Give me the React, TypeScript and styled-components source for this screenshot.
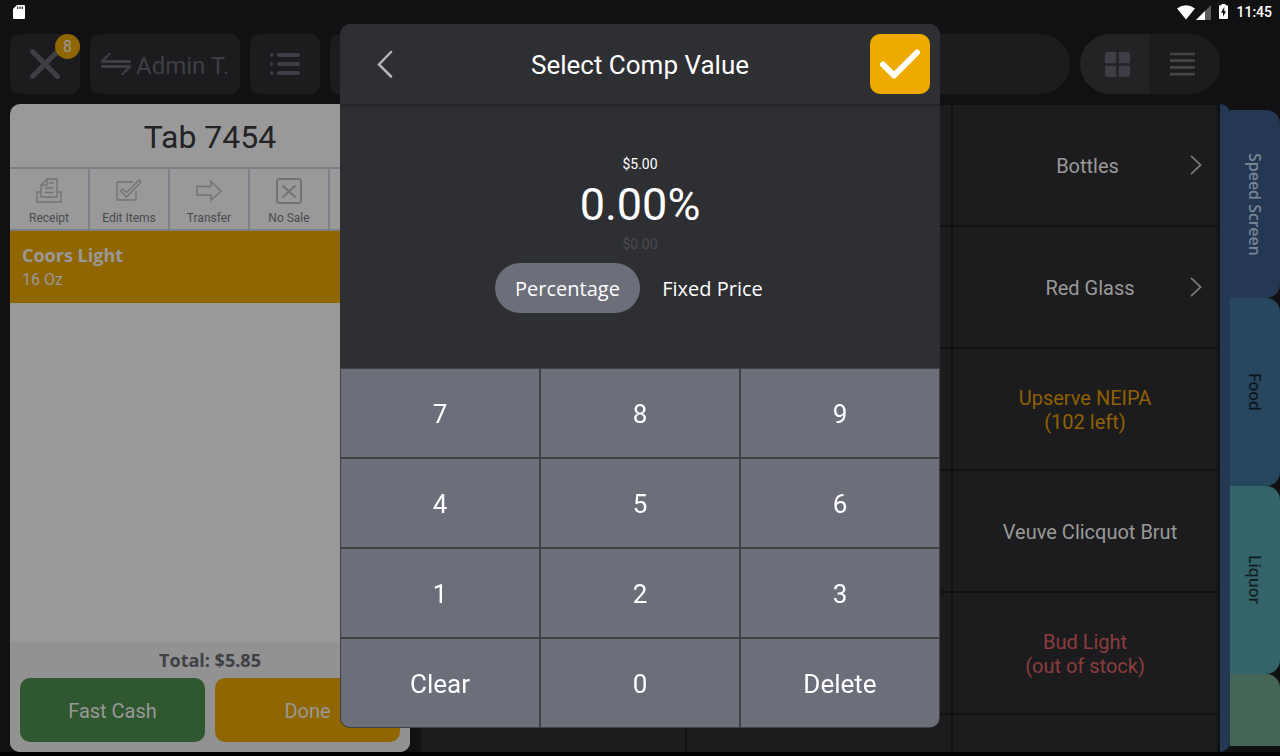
import React from "react";
import styled, { createGlobalStyle } from "styled-components";

const GlobalStyle = createGlobalStyle`
  * { box-sizing: border-box; }
  body { margin: 0; background: #111113; font-family: Roboto, "Liberation Sans", sans-serif; }
  button, input { font-family: inherit; border: 0; margin: 0; padding: 0; }
  button { cursor: pointer; }
  h1, h2, p { margin: 0; font-weight: 400; }
  svg { display: block; flex: none; }
`;

const Page = styled.div`
  height: 100vh;
  display: flex;
  flex-direction: column;
  background: #111113;
  border-bottom: 4px solid #000;
  overflow: hidden;
`;

const StatusBar = styled.header`
  height: 24px;
  flex: none;
  display: flex;
  align-items: center;
  justify-content: space-between;
  padding: 0 8px 0 13px;
`;

const StatusIcons = styled.div`
  display: flex;
  align-items: center;
  gap: 8px;
  color: #fff;
  font-size: 14px;
  font-weight: 500;
`;

const Signals = styled.span`
  display: flex;
  gap: 1px;
`;

const Toolbar = styled.div`
  flex: none;
  display: flex;
  gap: 10px;
  padding: 10px 60px 10px 10px;
`;

const ToolButton = styled.button<{ $width?: number }>`
  position: relative;
  flex: none;
  width: ${(p) => p.$width ?? 70}px;
  height: 60px;
  display: flex;
  align-items: center;
  justify-content: center;
  gap: 5px;
  border-radius: 10px;
  background: #1c1c1e;
  color: #3e3f46;
  font-size: 24px;
  line-height: 32px;
`;

const ToolLabel = styled.span`
  padding-top: 4px;
`;

const Badge = styled.span`
  position: absolute;
  top: 0;
  right: 0;
  width: 25px;
  height: 25px;
  border-radius: 50%;
  background: #906600;
  color: #999;
  font-size: 16px;
  line-height: 25px;
  text-align: center;
`;

const Search = styled.input`
  flex: 1;
  min-width: 0;
  height: 60px;
  border-radius: 30px;
  padding: 0 30px;
  background: #1c1c1e;
  color: #999;
  font-size: 20px;
  outline: none;
`;

const ViewToggle = styled.div`
  flex: none;
  display: flex;
  border-radius: 30px;
  overflow: hidden;
`;

const ViewButton = styled.button<{ $active?: boolean }>`
  width: 70px;
  height: 60px;
  display: flex;
  align-items: center;
  justify-content: center;
  background: ${(p) => (p.$active ? "#232326" : "#1c1c1e")};
  color: ${(p) => (p.$active ? "#3e3f46" : "#454547")};
  padding-left: ${(p) => (p.$active ? 5 : 0)}px;
  padding-right: ${(p) => (p.$active ? 0 : 5)}px;
`;

const Main = styled.main`
  flex: 1;
  min-height: 0;
  display: flex;
  padding-left: 10px;
`;

const Tab = styled.section`
  flex: none;
  width: 400px;
  margin-right: 10px;
  display: flex;
  flex-direction: column;
  border-radius: 10px;
  background: #999;
  overflow: hidden;
`;

const TabTitle = styled.h1`
  height: 65px;
  border-bottom: 2px solid #7d7e86;
  color: #232325;
  font-size: 32px;
  line-height: 66px;
  text-align: center;
`;

const Actions = styled.div`
  display: grid;
  grid-template-columns: repeat(5, 1fr);
  border-bottom: 2px solid #7d7e86;
`;

const Action = styled.button`
  height: 60px;
  display: flex;
  flex-direction: column;
  align-items: center;
  padding-top: 9px;
  gap: 7px;
  background: none;
  color: #494a50;
  font-size: 12px;
  line-height: 14px;
  border-right: 2px solid #7d7e86;
  &:last-child { border-right: 0; }
  svg { color: #737373; }
`;

const Item = styled.button`
  height: 72px;
  padding: 0 12px;
  background: #906600;
  color: #999;
  text-align: left;
`;

const ItemName = styled.span`
  display: block;
  font: 700 18px/26px "Open Sans", "Noto Sans", sans-serif;
`;

const ItemDetail = styled.span`
  display: block;
  font-size: 16px;
  line-height: 24px;
`;

const TabFooter = styled.footer`
  margin-top: auto;
  padding: 0 10px 10px;
  background: #929292;
`;

const Total = styled.p`
  color: #404147;
  font: 700 18px/36px "Open Sans", "Noto Sans", sans-serif;
  text-align: center;
`;

const PayRow = styled.div`
  display: grid;
  grid-template-columns: 1fr 1fr;
  gap: 10px;
`;

const PayButton = styled.button<{ $color: string }>`
  height: 64px;
  padding-top: 2px;
  border-radius: 10px;
  background: ${(p) => p.$color};
  color: #999;
  font-size: 20px;
`;

const Menu = styled.div`
  flex: 1;
  min-width: 0;
  margin-right: 2px;
  display: grid;
  grid-template-columns: repeat(3, 1fr);
  grid-auto-rows: 122px;
  overflow: hidden;
`;

const MenuItem = styled.button<{ $tone?: string; $indent?: number }>`
  position: relative;
  margin: 1px;
  padding-top: 2px;
  padding-left: ${(p) => p.$indent ?? 0}px;
  background: #1c1c1e;
  color: ${(p) => p.$tone ?? "#999"};
  font-size: 20px;
  line-height: 24px;
  white-space: pre-line;
`;

const More = styled.svg`
  position: absolute;
  right: 15px;
  top: 50px;
`;

const Rail = styled.div`
  flex: none;
  width: 10px;
  border-radius: 0 10px 10px 0;
  background: #243854;
`;

const Categories = styled.nav`
  flex: none;
  width: 50px;
  margin: 6px 0;
  overflow: hidden;
`;

const Category = styled.button<{ $color: string; $text: string }>`
  width: 50px;
  height: 188px;
  display: flex;
  align-items: center;
  justify-content: center;
  writing-mode: vertical-rl;
  border-radius: 0 14px 14px 0;
  background: ${(p) => p.$color};
  color: ${(p) => p.$text};
  font: 500 16px/20px "Noto Sans", "Open Sans", sans-serif;
`;

const Overlay = styled.div`
  position: fixed;
  inset: 24px 0 0;
  display: flex;
  justify-content: center;
  align-items: flex-start;
`;

const Dialog = styled.section`
  width: 600px;
  max-width: 100%;
  border-radius: 10px;
  background: #2e2f33;
  color: #fff;
  overflow: hidden;
`;

const DialogHeader = styled.header`
  height: 80px;
  padding: 0 10px;
  display: grid;
  grid-template-columns: 70px 1fr 70px;
  align-items: center;
  box-shadow: 0 1px 3px rgba(0, 0, 0, 0.4);
`;

const DialogTitle = styled.h2`
  padding-top: 2px;
  font-size: 26px;
  line-height: 32px;
  text-align: center;
`;

const BackButton = styled.button`
  width: 70px;
  height: 60px;
  display: flex;
  align-items: center;
  justify-content: center;
  background: none;
  color: #b4b4b6;
`;

const ConfirmButton = styled.button`
  justify-self: end;
  width: 60px;
  height: 60px;
  display: flex;
  align-items: center;
  justify-content: center;
  border-radius: 10px;
  background: #efaa00;
  color: #fff;
`;

const Amounts = styled.div`
  height: 264px;
  padding-top: 50px;
  text-align: center;
`;

const Price = styled.p<{ $faded?: boolean }>`
  color: ${(p) => (p.$faded ? "#4a4b4f" : "#fff")};
  font-size: 14px;
  line-height: 20px;
`;

const Value = styled.p`
  padding-top: 2px;
  font-size: 45px;
  line-height: 58px;
`;

const Modes = styled.div`
  display: flex;
  justify-content: center;
  margin-top: 9px;
`;

const Mode = styled.button<{ $active?: boolean }>`
  width: 145px;
  height: 50px;
  padding-top: 2px;
  border-radius: 25px;
  background: ${(p) => (p.$active ? "#6c6e7a" : "none")};
  color: #fff;
  font: 400 20px/28px "Open Sans", "Noto Sans", sans-serif;
`;

const Keypad = styled.div`
  display: grid;
  grid-template-columns: repeat(3, 1fr);
  border-radius: 0 0 10px 10px;
  overflow: hidden;
`;

const Key = styled.button`
  height: 90px;
  padding-top: 2px;
  border: 1px solid #414144;
  background: #6c6e7a;
  color: #fff;
  font-size: 26px;
  &:nth-last-child(3) { border-bottom-left-radius: 10px; }
  &:last-child { border-bottom-right-radius: 10px; }
`;

const ReceiptIcon = () => (
  <svg width="26" height="26" viewBox="0 0 26 26" fill="none" stroke="currentColor" strokeWidth="1.4">
    <path d="M5 19V7l6-6h10v18zM5 7h6V1" />
    <path d="M5 14H1v10h24V14h-4M13 5h4.500M9 10h8.500M9 14.500h8.500" />
  </svg>
);

const EditIcon = () => (
  <svg width="26" height="26" viewBox="0 0 26 26" fill="none" stroke="currentColor" strokeWidth="1.4">
    <path d="M17 4H2q-1 0-1 1v16q0 1 1 1h17q1 0 1-1v-8" />
    <path d="M4.500 13l2-2 4 3.500L23 2l2 2-14.500 15z" strokeLinejoin="round" />
  </svg>
);

const TransferIcon = () => (
  <svg width="26" height="26" viewBox="0 0 26 26" fill="none" stroke="currentColor" strokeWidth="1.500">
    <path d="M1 8.500h14V3.500L25 13 15 22v-5H1z" />
  </svg>
);

const NoSaleIcon = () => (
  <svg width="26" height="26" viewBox="0 0 26 26" fill="none" stroke="currentColor">
    <rect x="1" y="1" width="24" height="24" rx="2.500" strokeWidth="2" />
    <path d="M6.500 7.500l13 12M19.500 7.500l-13 12" strokeWidth="2" />
  </svg>
);

const actions = [
  { label: "Receipt", icon: <ReceiptIcon /> },
  { label: "Edit Items", icon: <EditIcon /> },
  { label: "Transfer", icon: <TransferIcon /> },
  { label: "No Sale", icon: <NoSaleIcon /> },
];

type MenuEntry = { label: string; more?: boolean; tone?: string; indent?: number };

const menu: MenuEntry[] = [
  { label: "Bottles", more: true, indent: 5 },
  { label: "Red Glass", more: true, indent: 10 },
  { label: "Upserve NEIPA\n(102 left)", tone: "#906000" },
  { label: "Veuve Clicquot Brut", indent: 10 },
  { label: "Bud Light\n(out of stock)", tone: "#8c3c3c" },
  { label: "" },
];

const categories = [
  { label: "Speed Screen", color: "#243854", text: "#7c8794" },
  { label: "Food", color: "#26475e", text: "#0c151c" },
  { label: "Liquor", color: "#34636a", text: "#101e20" },
  { label: "", color: "#456657", text: "#151f1a" },
];

const keys = ["7", "8", "9", "4", "5", "6", "1", "2", "3", "Clear", "0", "Delete"];

export default function App() {
  return (
    <>
      <GlobalStyle />
      <Page>
        <StatusBar>
          <svg width="12" height="14" viewBox="0 0 12 14">
            <path d="M4 0h7q1 0 1 1v12q0 1-1 1H1q-1 0-1-1V4z" fill="#fff" />
            <path d="M4.700 1.500v2.500M7 1.500v2.500M9.300 1.500v2.500" stroke="#111113" strokeWidth="1.100" />
          </svg>
          <StatusIcons>
            <Signals>
              <svg width="18" height="15" viewBox="0 0 18 15">
                <path d="M0 3.500Q9-3 18 3.500L9 14.500z" fill="#fff" />
              </svg>
              <svg width="15" height="15" viewBox="0 0 15 15">
                <path d="M0 15L15 0v15z" fill="#5c5c5d" />
                <path d="M0 15L9 6v9z" fill="#fff" />
              </svg>
            </Signals>
            <svg width="9" height="17" viewBox="0 0 9 17">
              <path d="M2.500 0h4v1.200H8q1 0 1 1V14q0 1-1 1H1q-1 0-1-1V2.200q0-1 1-1h1.500z" fill="#fff" />
              <path d="M5.300 3L2 8.800h2v4L7 7.200H5.300z" fill="#111113" />
            </svg>
            <time>11:45</time>
          </StatusIcons>
        </StatusBar>

        <Toolbar>
          <ToolButton aria-label="Close">
            <svg width="30" height="30" viewBox="0 0 30 30" stroke="currentColor" strokeWidth="5" strokeLinecap="round">
              <path d="M2.500 2.500l25 25M27.500 2.500l-25 25" />
            </svg>
            <Badge>8</Badge>
          </ToolButton>
          <ToolButton $width={150}>
            <svg width="30" height="22" viewBox="0 0 30 22" fill="currentColor">
              <path d="M0 10V7.500L8 0h2.500L4.500 7H30v3zM30 12v2.500L22 22h-2.500L25.500 15H0v-3z" />
            </svg>
            <ToolLabel>Admin T.</ToolLabel>
          </ToolButton>
          <ToolButton aria-label="Orders">
            <svg width="30" height="24" viewBox="0 0 30 24" fill="currentColor">
              <path d="M9 3h19M9 12h19M9 21h19" stroke="currentColor" strokeWidth="4" strokeLinecap="round" />
              <circle cx="1.700" cy="3" r="1.800" />
              <circle cx="1.700" cy="12" r="1.800" />
              <circle cx="1.700" cy="21" r="1.800" />
            </svg>
          </ToolButton>
          <ToolButton aria-label="Options" />
          <Search type="search" aria-label="Search" />
          <ViewToggle>
            <ViewButton $active aria-label="Grid view">
              <svg width="25" height="25" viewBox="0 0 25 25" fill="currentColor">
                <path d="M3 0h8.200v11.200H0V3q0-3 3-3zM13.800 0H22q3 0 3 3v8.200H13.800zM0 13.800h11.200V25H3q-3 0-3-3zM13.800 13.800H25V22q0 3-3 3h-8.200z" />
              </svg>
            </ViewButton>
            <ViewButton aria-label="List view">
              <svg width="25" height="24" viewBox="0 0 25 24" stroke="currentColor" strokeWidth="2.700">
                <path d="M0 2h25M0 8.700h25M0 15.400h25M0 22.100h25" />
              </svg>
            </ViewButton>
          </ViewToggle>
        </Toolbar>

        <Main>
          <Tab>
            <TabTitle>Tab 7454</TabTitle>
            <Actions>
              {actions.map((a) => (
                <Action key={a.label}>
                  {a.icon}
                  {a.label}
                </Action>
              ))}
              <Action aria-label="More" />
            </Actions>
            <Item>
              <ItemName>Coors Light</ItemName>
              <ItemDetail>16 Oz</ItemDetail>
            </Item>
            <TabFooter>
              <Total>Total: $5.85</Total>
              <PayRow>
                <PayButton $color="#305830">Fast Cash</PayButton>
                <PayButton $color="#906600">Done</PayButton>
              </PayRow>
            </TabFooter>
          </Tab>

          <Menu>
            {menu.map((m) => (
              <React.Fragment key={m.label}>
                <MenuItem aria-label="Item" />
                <MenuItem aria-label="Item" />
                <MenuItem $tone={m.tone} $indent={m.indent}>
                  {m.label}
                  {m.more && (
                    <More width="12" height="20" viewBox="0 0 12 20" fill="none" stroke="#777" strokeWidth="1.800">
                      <path d="M1 .8l9.600 9.200L1 19.200" />
                    </More>
                  )}
                </MenuItem>
              </React.Fragment>
            ))}
          </Menu>
          <Rail />
          <Categories>
            {categories.map((c) => (
              <Category key={c.color} $color={c.color} $text={c.text}>
                {c.label}
              </Category>
            ))}
          </Categories>
        </Main>
      </Page>

      <Overlay>
        <Dialog role="dialog" aria-labelledby="comp-title">
          <DialogHeader>
            <BackButton aria-label="Back">
              <svg width="16" height="28" viewBox="0 0 16 28" fill="none" stroke="currentColor" strokeWidth="2.500" strokeLinecap="round">
                <path d="M14 2L2 14.500l12 12" />
              </svg>
            </BackButton>
            <DialogTitle id="comp-title">Select Comp Value</DialogTitle>
            <ConfirmButton aria-label="Confirm">
              <svg width="40" height="30" viewBox="0 0 40 30" fill="none" stroke="currentColor" strokeWidth="6" strokeLinecap="round" strokeLinejoin="round">
                <path d="M3 15.500l11 11L37 3.500" />
              </svg>
            </ConfirmButton>
          </DialogHeader>
          <Amounts>
            <Price>$5.00</Price>
            <Value>0.00%</Value>
            <Price $faded>$0.00</Price>
            <Modes>
              <Mode $active aria-pressed="true">Percentage</Mode>
              <Mode aria-pressed="false">Fixed Price</Mode>
            </Modes>
          </Amounts>
          <Keypad>
            {keys.map((k) => (
              <Key key={k}>{k}</Key>
            ))}
          </Keypad>
        </Dialog>
      </Overlay>
    </>
  );
}
